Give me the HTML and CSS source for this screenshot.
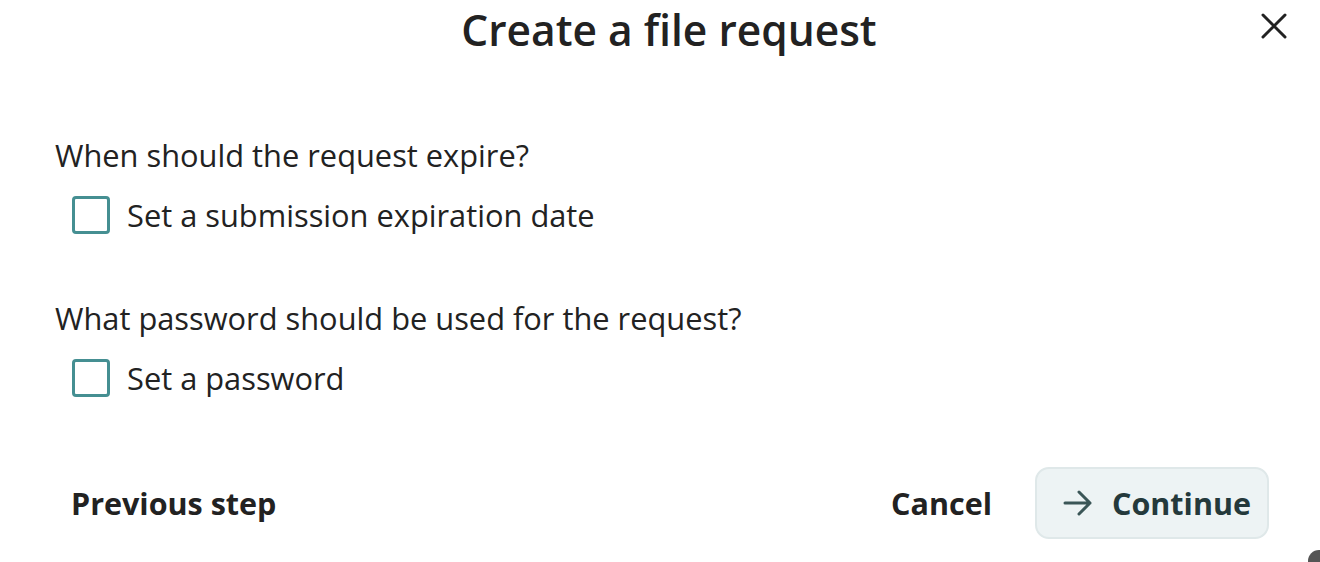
FILE: index.html
```html
<!DOCTYPE html>
<html lang="en">
<head>
<meta charset="utf-8">
<title>Create a file request</title>
<link rel="stylesheet" href="styles.css">
</head>
<body>
<div class="dialog">
  <header class="dialog-header">
    <span class="spacer"></span>
    <h2 class="dialog-title">Create a file request</h2>
    <button class="close-btn" aria-label="Close">
      <svg width="28" height="28" viewBox="0 0 28 28"><path d="M3 3 L25 25 M25 3 L3 25" stroke="#222" stroke-width="3" stroke-linecap="round" fill="none"/></svg>
    </button>
  </header>
  <main class="dialog-body">
    <section class="field">
      <p class="question">When should the request expire?</p>
      <label class="check-row"><span class="checkbox"></span><span class="check-label">Set a submission expiration date</span></label>
    </section>
    <section class="field field-second">
      <p class="question">What password should be used for the request?</p>
      <label class="check-row"><span class="checkbox"></span><span class="check-label">Set a password</span></label>
    </section>
  </main>
  <footer class="dialog-footer">
    <button class="btn btn-tertiary btn-prev">Previous step</button>
    <div class="footer-right">
      <button class="btn btn-tertiary">Cancel</button>
      <button class="btn btn-secondary">
        <svg width="30" height="30" viewBox="0 0 30 30"><path d="M2 15 H27 M16 4 L27 15 L16 26" stroke="#3b5657" stroke-width="3" stroke-linecap="round" stroke-linejoin="round" fill="none"/></svg>
        <span>Continue</span>
      </button>
    </div>
  </footer>
  <span class="corner"></span>
</div>
</body>
</html>
```

FILE: styles.css
```css
* { box-sizing: border-box; }
html, body { margin: 0; padding: 0; background: #fff; }
body {
  font-family: "Open Sans", "Noto Sans", sans-serif;
  color: #222;
  overflow: hidden;
}
.dialog {
  position: relative;
  width: 1320px;
  height: 562px;
  display: flex;
  flex-direction: column;
}
.dialog-header {
  height: 60px;
  display: grid;
  grid-template-columns: 1fr auto 1fr;
  align-items: center;
  padding-left: 18px;
}
.dialog-title {
  margin: 0;
  font-size: 42.5px;
  font-weight: 600;
  line-height: 60px;
  color: #222;
}
.close-btn {
  justify-self: end;
  margin-right: 30px;
  margin-top: -8px;
  width: 32px;
  height: 32px;
  padding: 0;
  border: none;
  background: none;
  display: flex;
  align-items: center;
  justify-content: center;
}
.dialog-body {
  padding: 75px 0 0 55px;
}
.field-second { margin-top: 61px; }
.question {
  margin: 0;
  font-size: 30.8px;
  line-height: 40px;
}
.check-row {
  margin-top: 18px;
  height: 44px;
  display: flex;
  align-items: center;
  gap: 17px;
  padding-left: 17px;
}
.checkbox {
  width: 38px;
  height: 38px;
  border: 3.5px solid #458f92;
  border-radius: 4px;
  flex: none;
}
.check-label {
  font-size: 30.8px;
  line-height: 40px;
}
.dialog-footer {
  margin-top: 67px;
  display: flex;
  justify-content: space-between;
  align-items: center;
  padding: 0 51px 0 55px;
}
.footer-right {
  display: flex;
  align-items: center;
  gap: 27px;
}
.btn {
  font-family: inherit;
  font-size: 30.5px;
  font-weight: 700;
  color: #222;
  background: none;
  border: none;
  height: 72px;
  padding: 0 16px;
  border-radius: 14px;
  display: flex;
  align-items: center;
}
.btn-secondary {
  width: 234px;
  background: #edf3f4;
  border: 2px solid #dfe8e9;
  color: #24393b;
  gap: 19px;
  padding: 0 0 0 26px;
}
.corner {
  position: absolute;
  right: -10px;
  bottom: -10px;
  width: 22px;
  height: 22px;
  border-radius: 50%;
  background: #555;
}
```
